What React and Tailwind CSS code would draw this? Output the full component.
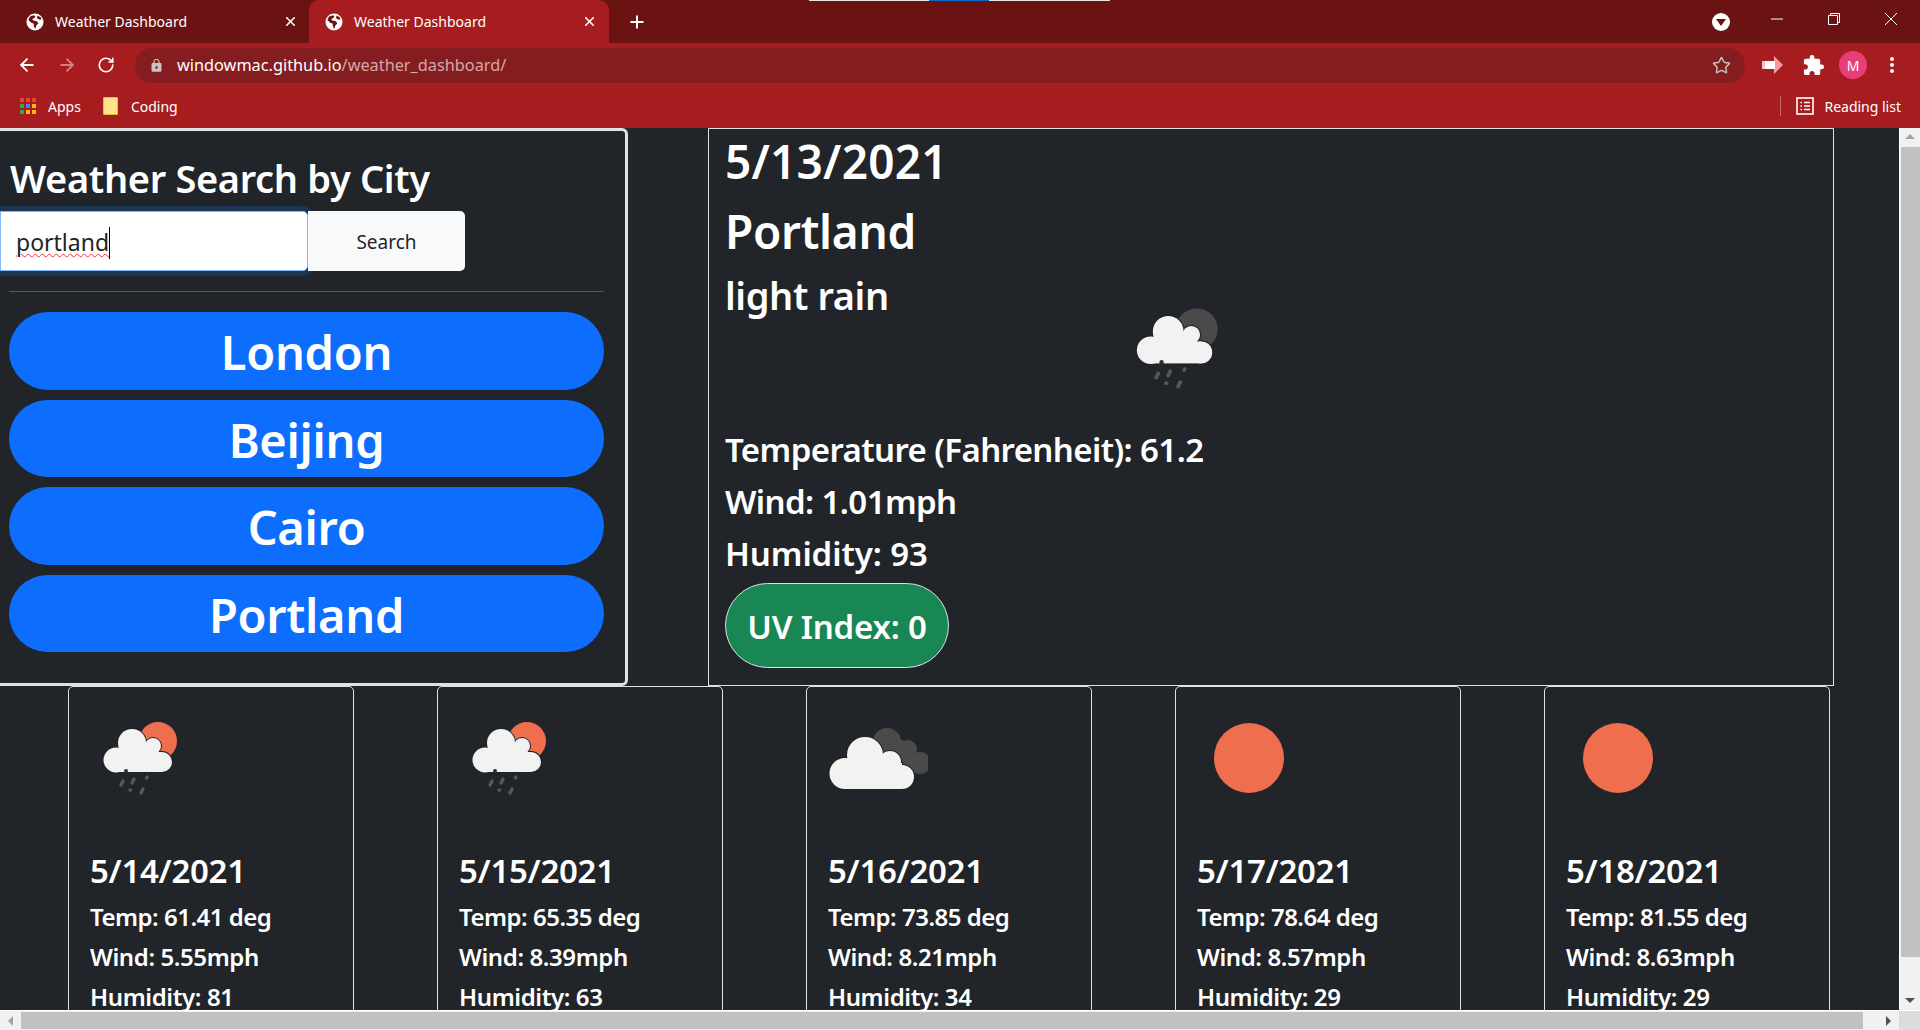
import { ArrowLeft, ArrowRight, RotateCw, Plus, X, Star } from "lucide-react";
import { MdExtension, MdLock, MdMoreVert } from "react-icons/md";

const cities = ["London", "Beijing", "Cairo", "Portland"];

const forecast = [
  { date: "5/14/2021", temp: "61.41", wind: "5.55", humidity: "81", icon: "rain" },
  { date: "5/15/2021", temp: "65.35", wind: "8.39", humidity: "63", icon: "rain" },
  { date: "5/16/2021", temp: "73.85", wind: "8.21", humidity: "34", icon: "clouds" },
  { date: "5/17/2021", temp: "78.64", wind: "8.57", humidity: "29", icon: "sun" },
  { date: "5/18/2021", temp: "81.55", wind: "8.63", humidity: "29", icon: "sun" },
];

const appColors = ["#ea4335", "#ea4335", "#ea4335", "#34a853", "#4285f4", "#fbbc05", "#34a853", "#fbbc05", "#fbbc05"];

function Globe() {
  return (
    <svg width="18" height="18" viewBox="0 0 18 18">
      <circle cx="9" cy="9" r="8.5" fill="#fff" />
      <path d="M8 2.2 4 3.5 2.4 7l3.2 3 2 .4.3 3 1.4 2.6 1-3.4 2-2-1.4-2.4-3.6-.6-1-1.6 2-1 1.2-1.4z" fill="#6b1212" />
      <path d="M11.5 2.6 11 5l2 1.4 2.6.2-1-2.4z" fill="#6b1212" />
    </svg>
  );
}

function RainCloud({ sun }) {
  const lobes = (
    <>
      <circle cx="42" cy="35" r="14" />
      <circle cx="63" cy="38" r="8" />
      <circle cx="26" cy="52" r="12.5" />
      <circle cx="72" cy="54" r="10" />
      <rect x="26" y="44" width="46" height="20" />
      <rect x="35" y="36" width="30" height="12" />
    </>
  );
  return (
    <>
      <circle cx="68" cy="33" r="19" fill={sun} />
      <g fill="#1f2226" stroke="#1f2226" strokeWidth="2">{lobes}</g>
      <g fill="#f2f2f2">{lobes}</g>
      <circle cx="36" cy="63" r="2" fill="#2c2f33" />
      <g stroke="#55585b" strokeWidth="3.4" strokeLinecap="round">
        <line x1="31" y1="77" x2="33" y2="73" />
        <line x1="42" y1="75" x2="44" y2="71" />
        <line x1="56.5" y1="70" x2="57" y2="69" />
        <line x1="40" y1="82" x2="40.5" y2="82" />
        <line x1="51" y1="85" x2="53" y2="81" />
      </g>
    </>
  );
}

function Clouds() {
  const front = (
    <>
      <circle cx="37" cy="47" r="18" />
      <circle cx="62" cy="54" r="11" />
      <circle cx="17" cy="65.5" r="15.5" />
      <circle cx="74" cy="69" r="12" />
      <rect x="17" y="55" width="57" height="26" />
    </>
  );
  return (
    <>
      <g fill="#4a4a4a">
        <circle cx="59" cy="34" r="14" />
        <circle cx="80" cy="41" r="9" />
        <circle cx="92" cy="55" r="11" />
        <path d="M60 25 82 36 90 50 80 64 50 40z" />
      </g>
      <g fill="#212529" stroke="#212529" strokeWidth="2">{front}</g>
      <g fill="#f2f2f0">{front}</g>
    </>
  );
}

function WeatherIcon({ type, sun = "#ee6e4d", size = 100 }) {
  return (
    <svg width={size} height={size} viewBox="0 0 100 100" className="block">
      {type === "rain" && <RainCloud sun={sun} />}
      {type === "clouds" && <Clouds />}
      {type === "sun" && <circle cx="52" cy="50" r="35" fill={sun} />}
    </svg>
  );
}

function BrowserChrome() {
  return (
    <div className="h-[128px] shrink-0 text-white text-[14px] font-['Noto_Sans',sans-serif]">
      {/* tabs */}
      <div className="h-[43px] bg-[#6b1212] flex relative">
        <div className="absolute top-0 left-[809px] w-[301px] h-px bg-[#e8e8e8]">
          <div className="ml-[120px] w-[60px] h-px bg-[#0a6cc8]" />
        </div>
        <div className="w-[309px] pl-[26px] pr-[11px] flex items-center">
          <Globe />
          <span className="ml-[11px] flex-1">Weather Dashboard</span>
          <X size={15} strokeWidth={2.6} />
        </div>
        <div className="w-[300px] pl-[16px] pr-[12px] flex items-center bg-[#a61c1f] rounded-t-[10px]">
          <Globe />
          <span className="ml-[11px] flex-1">Weather Dashboard</span>
          <X size={15} strokeWidth={2.6} />
        </div>
        <div className="w-[55px] flex items-center justify-center">
          <Plus size={20} strokeWidth={2.4} />
        </div>
        <div className="flex-1" />
        <div className="w-[18px] h-[18px] rounded-full bg-white flex items-center justify-center mr-[40px] mt-[13px]">
          <div className="w-0 h-0 border-x-[5px] border-x-transparent border-t-[7px] border-t-[#6b1212]" />
        </div>
        <div className="flex items-start pt-[12px] pr-[22px] gap-[43px]">
          <svg width="14" height="14" viewBox="0 0 14 14" fill="none" stroke="#fff"><path d="M1 7h12" /></svg>
          <svg width="14" height="14" viewBox="0 0 14 14" fill="none" stroke="#fff"><path d="M1.5 3.5h9v9h-9zM3.5 3.5v-2h9v9h-2" /></svg>
          <svg width="14" height="14" viewBox="0 0 14 14" fill="none" stroke="#fff"><path d="M1 1l12 12M13 1 1 13" /></svg>
        </div>
      </div>
      {/* address bar */}
      <div className="h-[42px] bg-[#a61c1f] flex items-center pt-[2px]">
        <div className="w-[135px] flex items-center pl-[17px] gap-[20px]">
          <ArrowLeft size={20} strokeWidth={2.2} />
          <ArrowRight size={20} strokeWidth={2.2} className="text-[#d77f80]" />
          <RotateCw size={18} strokeWidth={2.2} />
        </div>
        <div className="w-[1610px] h-[35px] rounded-full bg-[#851c1f] flex items-center pl-[14px] pr-[14px] text-[16.3px]">
          <MdLock size={15} className="text-[#c9c2c2]" />
          <span className="ml-[13px]">windowmac.github.io</span>
          <span className="text-[#d3a9aa]">/weather_dashboard/</span>
          <div className="flex-1" />
          <Star size={19} strokeWidth={1.8} className="text-[#c9c2c2]" />
        </div>
        <div className="flex-1 flex items-center pl-[17px]">
          <svg width="21" height="18" viewBox="0 0 21 18">
            <path d="M0 5h4v8H0z" fill="#f7c3c8" />
            <path d="M3 5h10v8H3z" fill="#fff" />
            <path d="M12 0l9 9-9 9z" fill="#f59aa3" />
            <path d="M12 5h1v8h-1z" fill="#fff" />
          </svg>
          <MdExtension size={23} className="ml-[19px]" />
          <div className="ml-[14px] w-[28px] h-[28px] rounded-full bg-[#e83e78] flex items-center justify-center text-[14px]">M</div>
          <MdMoreVert size={24} className="ml-[13px]" />
        </div>
      </div>
      {/* bookmarks */}
      <div className="h-[43px] bg-[#a61c1f] flex items-center pl-[20px] pb-[1px]">
        <div className="w-[16px] grid grid-cols-3 gap-[2px]">
          {appColors.map((c, i) => (
            <div key={i} className="w-[4px] h-[4px]" style={{ background: c }} />
          ))}
        </div>
        <span className="ml-[12px]">Apps</span>
        <div className="ml-[22px] w-[15px] h-[18px] bg-[#ffe38a] border border-[#e8b93c] rounded-[1px]" />
        <span className="ml-[13px]">Coding</span>
        <div className="flex-1" />
        <div className="w-px h-[20px] bg-[#c56a6b]" />
        <svg width="18" height="18" viewBox="0 0 18 18" fill="none" stroke="#fff" className="ml-[15px]">
          <rect x="1" y="1" width="16" height="16" strokeWidth="1.6" />
          <path d="M4.5 5.5h1.5M8 5.5h6M4.5 9h1.5M8 9h6M4.5 12.5h1.5M8 12.5h6" strokeWidth="1.5" />
        </svg>
        <span className="ml-[10px] mr-[19px]">Reading list</span>
      </div>
    </div>
  );
}

function SearchPanel() {
  return (
    <div className="-ml-[3px] w-[631px] h-[558px] shrink-0 border-[3px] border-[#dee2e6] rounded-r-[6px] pt-[17px]">
      <h2 className="h-[60px] pl-[10px] text-[38px] leading-[60px] font-semibold tracking-[-0.35px] text-white">Weather Search by City</h2>
      <div className="flex mt-[3px]">
        <div className="w-[308px] h-[60px] bg-white border border-[#86b7fe] rounded-r-[5px] shadow-[0_0_0_5px_#1c3557] flex items-center pl-[15px] pt-[3px] text-[23px] text-[#212529]">
          <span className="underline decoration-wavy decoration-red-500 decoration-1 underline-offset-2">portland</span>
          <span className="w-px h-[32px] bg-black" />
        </div>
        <div className="relative w-[157px] h-[60px] bg-[#f8f9fa] rounded-r-[5px] flex items-center justify-center pt-[2px] text-[19px] text-[#212529]">Search</div>
      </div>
      <div className="ml-[9px] mt-[20px] w-[595px] h-px bg-[#55585c]" />
      <div className="ml-[9px] mt-[20px] w-[595px] flex flex-col gap-[10px]">
        {cities.map((city) => (
          <div key={city} className="h-[77.5px] rounded-full bg-[#0d6efd] flex items-center justify-center pt-[3px] text-white text-[47px] font-semibold tracking-[-0.3px]">{city}</div>
        ))}
      </div>
    </div>
  );
}

function CurrentWeather() {
  return (
    <div className="ml-[80px] w-[1126px] h-[558px] shrink-0 border border-[#dee2e6] pl-[16px] text-white font-semibold">
      <div className="text-[46px] leading-[64px] tracking-[0.2px]">5/13/2021</div>
      <div className="text-[46px] leading-[76px] tracking-[-0.3px]">Portland</div>
      <div className="text-[38px] leading-[52px] tracking-[-0.4px]">light rain</div>
      <div className="ml-[397px] -mt-[28px]">
        <WeatherIcon type="rain" sun="#4a4a4a" size={110} />
      </div>
      <div className="mt-[21px] text-[33px] leading-[52px] tracking-[-0.6px]">Temperature (Fahrenheit): 61.2</div>
      <div className="text-[33px] leading-[52px] tracking-[-0.6px]">Wind: 1.01mph</div>
      <div className="text-[33px] leading-[52px] tracking-[-0.1px]">Humidity: 93</div>
      <div className="mt-[3px] w-[224px] h-[85px] rounded-full bg-[#198754] border border-[#dee2e6] flex items-center justify-center pt-[3px] text-[33px] tracking-[-0.2px]">UV Index: 0</div>
    </div>
  );
}

function ForecastCard({ day }) {
  return (
    <div className="w-[286.2px] h-[400px] shrink-0 border border-[#dee2e6] rounded-[5px] px-[21px] pt-[21px] text-white font-semibold">
      <WeatherIcon type={day.icon} />
      <div className="mt-[39px] text-[33px] leading-[48px] tracking-[-0.3px]">{day.date}</div>
      <div className="mt-[2px] text-[24px] leading-[40px] tracking-[-0.5px]">Temp: {day.temp} deg</div>
      <div className="text-[24px] leading-[40px] tracking-[-0.4px]">Wind: {day.wind}mph</div>
      <div className="text-[24px] leading-[40px] tracking-[-0.4px]">Humidity: {day.humidity}</div>
    </div>
  );
}

export default function App() {
  return (
    <div className="w-[1920px] h-[1030px] flex flex-col overflow-hidden bg-[#212529] font-['Noto_Sans',sans-serif]">
      <BrowserChrome />
      <div className="flex-1 flex min-h-0">
        <div className="flex-1 min-w-0 overflow-hidden">
          <div className="flex">
            <SearchPanel />
            <CurrentWeather />
          </div>
          <div className="flex pl-[68px] gap-[82.8px]">
            {forecast.map((day) => (
              <ForecastCard key={day.date} day={day} />
            ))}
          </div>
        </div>
        {/* vertical scrollbar */}
        <div className="w-[21px] shrink-0 bg-[#f1f1f1] flex flex-col items-center pt-[6px] pb-[7px] border-l border-white">
          <div className="w-0 h-0 border-x-[5px] border-x-transparent border-b-[5px] border-b-[#a3a3a3]" />
          <div className="mt-[8px] w-[19px] h-[810px] bg-[#c1c1c1]" />
          <div className="flex-1" />
          <div className="w-0 h-0 border-x-[5px] border-x-transparent border-t-[5px] border-t-[#505050]" />
        </div>
      </div>
      {/* horizontal scrollbar */}
      <div className="h-[20px] shrink-0 flex bg-[#f1f1f1] border-t border-white">
        <div className="w-[21px] flex items-center justify-center">
          <div className="w-0 h-0 border-y-[5px] border-y-transparent border-r-[5px] border-r-[#a3a3a3]" />
        </div>
        <div className="w-[1842px] h-[17px] mt-px bg-[#c1c1c1]" />
        <div className="w-[36px] flex items-center justify-end pr-[8px]">
          <div className="w-0 h-0 border-y-[5px] border-y-transparent border-l-[5px] border-l-[#505050]" />
        </div>
        <div className="flex-1 bg-[#dcdcdc]" />
      </div>
    </div>
  );
}
